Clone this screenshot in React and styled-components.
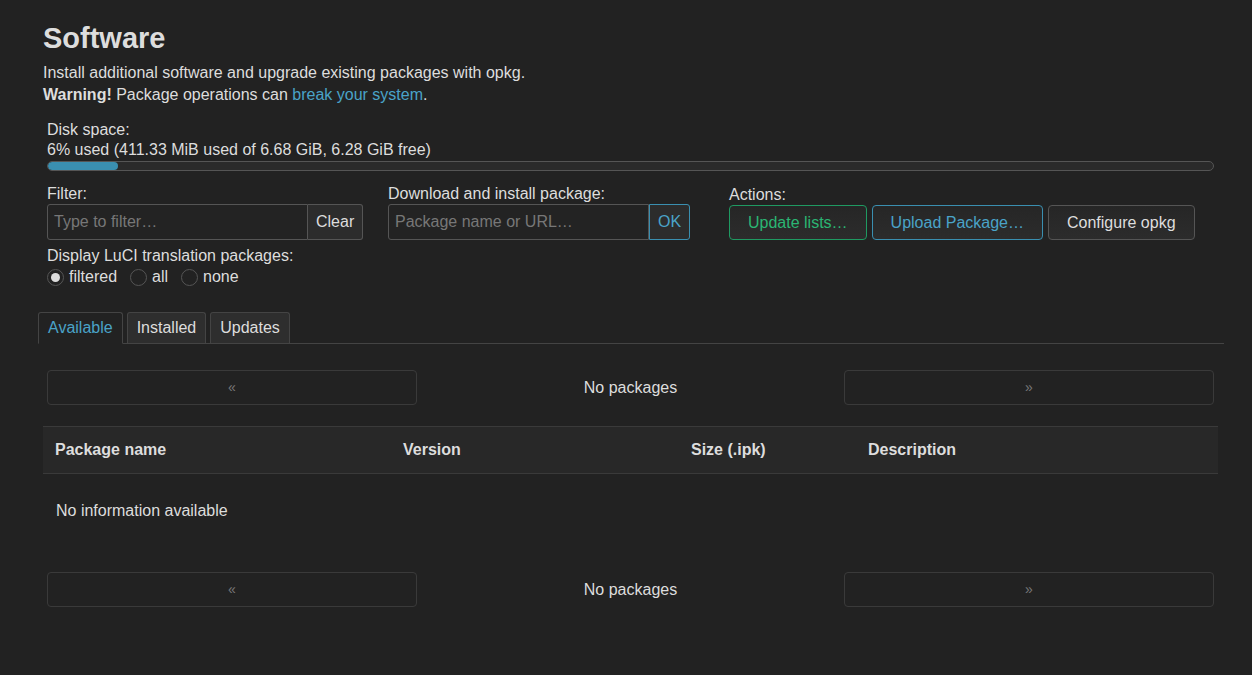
import React from "react";
import styled, { createGlobalStyle } from "styled-components";

const G = createGlobalStyle`
  html,body{margin:0;background:#222;}
  body{font-family:"Liberation Sans",Arial,sans-serif;color:#ddd;font-size:16px;}
`;
const Page = styled.div`padding:22px 34px 40px 43px;`;
const Title = styled.h2`margin:0 0 8px;font-size:29px;font-weight:bold;color:#ddd;line-height:32px;`;
const P = styled.div`line-height:22px;color:#ddd;`;
const Link = styled.span`color:#4aa3c8;`;
const Section = styled.div`padding:0 4px;margin-top:14px;`;
const Bar = styled.div`height:8px;border:1px solid #555;border-radius:5px;background:#2a2a2a;margin-top:1px;overflow:hidden;`;
const Fill = styled.div`height:100%;background:#3a8fb0;border-radius:4px;`;
const Row = styled.div`display:grid;grid-template-columns:341px 341px 1fr;margin-top:13px;`;
const Label = styled.div`line-height:20px;`;
const Group = styled.div`display:flex;margin-top:0;`;
const Input = styled.div`width:${p=>p.w}px;height:36px;box-sizing:border-box;border:1px solid #555;border-radius:3px 0 0 3px;background:#232323;color:#777;padding:0 6px;line-height:34px;`;
const Addon = styled.div`height:36px;box-sizing:border-box;border:1px solid ${p=>p.c||"#555"};border-left:${p=>p.c?"":"none"};border-radius:0 3px 3px 0;background:#2c2c2c;color:${p=>p.t||"#ddd"};padding:0 8px;line-height:34px;`;
const Btns = styled.div`display:flex;gap:5px;margin-top:0;`;
const Btn = styled.div`height:35px;box-sizing:border-box;border:1px solid ${p=>p.c};border-radius:4px;color:${p=>p.t};padding:0 18px;line-height:33px;background:linear-gradient(#262626,#2c2c2c);`;
const Radios = styled.div`display:flex;align-items:center;gap:5px;margin-top:0;line-height:22px;`;
const RadioItem = styled.span`display:inline-flex;align-items:center;gap:5px;margin-right:8px;`;
const Radio = styled.span`width:17px;height:17px;box-sizing:border-box;border-radius:50%;border:1px solid #555;display:inline-flex;align-items:center;justify-content:center;&::after{content:"";width:9px;height:9px;border-radius:50%;background:${p=>p.on?"#ddd":"transparent"};}`;
const Tabs = styled.div`display:flex;gap:4px;margin:24px -6px 0 -5px;border-bottom:1px solid #444;`;
const Tab = styled.div`height:31px;box-sizing:border-box;padding:0 9px;line-height:30px;border:1px solid #444;border-bottom:none;border-radius:3px 3px 0 0;background:${p=>p.a?"#222":"#2e2e2e"};color:${p=>p.a?"#4aa3c8":"#ddd"};margin-bottom:-1px;${p=>p.a?"border-bottom:1px solid #222;height:32px;":""}`;
const Pager = styled.div`display:grid;grid-template-columns:370px 1fr 370px;align-items:center;margin:${p=>p.m};padding:0 4px;`;
const PBtn = styled.div`height:35px;box-sizing:border-box;border:1px solid #3a3a3a;border-radius:4px;text-align:center;line-height:33px;color:#777;font-size:14px;`;
const PText = styled.div`text-align:center;`;
const THead = styled.div`display:grid;grid-template-columns:348px 288px 177px 1fr;height:46px;align-items:center;background:#282828;border-top:1px solid #3a3a3a;border-bottom:1px solid #3a3a3a;padding-left:12px;font-weight:bold;margin-top:21px;`;
const Empty = styled.div`padding:28px 13px 0;`;

export default function App(){
  return <Page><G/>
    <Title>Software</Title>
    <P>Install additional software and upgrade existing packages with opkg.</P>
    <P><b>Warning!</b> Package operations can <Link>break your system</Link>.</P>
    <Section>
      <Label>Disk space:</Label>
      <Label>6% used (411.33 MiB used of 6.68 GiB, 6.28 GiB free)</Label>
      <Bar><Fill style={{width:"6%"}}/></Bar>
      <Row>
        <div><Label>Filter:</Label><Group><Input w={261}>Type to filter…</Input><Addon>Clear</Addon></Group></div>
        <div><Label>Download and install package:</Label><Group><Input w={261}>Package name or URL…</Input><Addon c="#3a8fb0" t="#4aa3c8">OK</Addon></Group></div>
        <div><Label style={{marginTop:1}}>Actions:</Label><Btns>
          <Btn c="#1f9a62" t="#2bb673">Update lists…</Btn>
          <Btn c="#3a8fb0" t="#4aa3c8">Upload Package…</Btn>
          <Btn c="#555" t="#ddd">Configure opkg</Btn></Btns></div>
      </Row>
      <Label style={{marginTop:6}}>Display LuCI translation packages:</Label>
      <Radios><RadioItem><Radio on/>filtered</RadioItem><RadioItem><Radio/>all</RadioItem><RadioItem><Radio/>none</RadioItem></Radios>
    </Section>
    <Tabs><Tab a>Available</Tab><Tab>Installed</Tab><Tab>Updates</Tab></Tabs>
    <Pager m="26px 0 0"><PBtn>«</PBtn><PText>No packages</PText><PBtn>»</PBtn></Pager>
    <THead><span>Package name</span><span>Version</span><span>Size (.ipk)</span><span>Description</span></THead>
    <Empty>No information available</Empty>
    <Pager m="52px 0 0"><PBtn>«</PBtn><PText>No packages</PText><PBtn>»</PBtn></Pager>
  </Page>;
}
